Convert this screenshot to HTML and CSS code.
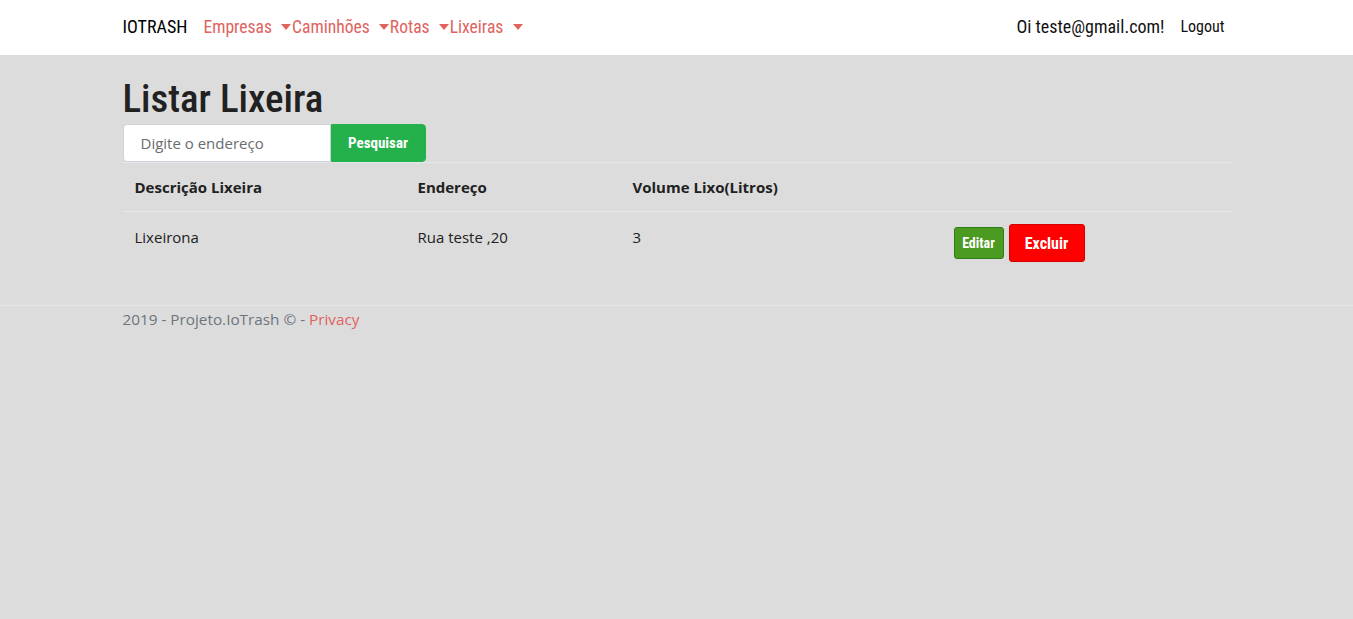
FILE: index.html
```html
<!DOCTYPE html>
<html lang="pt-BR">
<head>
<meta charset="utf-8">
<title>Listar Lixeira - IoTrash</title>
<link rel="stylesheet" href="styles.css">
</head>
<body>
<header class="navbar">
  <div class="container nav-inner">
    <div class="nav-left">
      <a class="brand" href="#">IOTRASH</a>
      <a class="nav-link" href="#">Empresas <span class="caret"></span></a>
      <a class="nav-link" href="#">Caminhões <span class="caret"></span></a>
      <a class="nav-link" href="#">Rotas <span class="caret"></span></a>
      <a class="nav-link" href="#">Lixeiras <span class="caret"></span></a>
    </div>
    <div class="nav-right">
      <span class="hello">Oi teste@gmail.com!</span>
      <a class="logout" href="#">Logout</a>
    </div>
  </div>
</header>
<main class="container">
  <h1 class="title">Listar Lixeira</h1>
  <form class="search">
    <input class="search-input" type="text" placeholder="Digite o endereço">
    <button class="btn btn-search" type="button">Pesquisar</button>
  </form>
  <table class="table">
    <thead>
      <tr>
        <th class="c1">Descrição Lixeira</th>
        <th class="c2">Endereço</th>
        <th class="c3">Volume Lixo(Litros)</th>
        <th class="c4"></th>
      </tr>
    </thead>
    <tbody>
      <tr>
        <td>Lixeirona</td>
        <td>Rua teste ,20</td>
        <td>3</td>
        <td class="actions">
          <div class="action-row">
            <a class="btn btn-edit" href="#">Editar</a>
            <a class="btn btn-del" href="#">Excluir</a>
          </div>
        </td>
      </tr>
    </tbody>
  </table>
</main>
<footer class="footer">
  <div class="container">2019 - Projeto.IoTrash © - <a class="privacy" href="#">Privacy</a></div>
</footer>
</body>
</html>
```
FILE: styles.css
```css
* { box-sizing: border-box; }
html, body { margin: 0; padding: 0; }
body {
  background: #dcdcdc;
  font-family: "Open Sans", "Noto Sans", sans-serif;
  font-size: 16px;
  color: #212529;
  min-height: 619px;
}
a { text-decoration: none; }
.container {
  width: 1140px;
  margin: 0 auto;
  padding: 0 14px 0 16px;
}
.navbar {
  background: #fff;
  height: 55px;
}
.nav-inner {
  display: flex;
  align-items: center;
  justify-content: space-between;
  height: 55px;
  padding-bottom: 2px;
}
.nav-left, .nav-right {
  display: flex;
  align-items: center;
  font-family: "Roboto", sans-serif;
  font-stretch: 84%;
}
.brand {
  color: #000;
  font-size: 18px;
  margin-right: 16px;
}
.nav-link {
  color: #e0635d;
  font-size: 17.6px;
  display: flex;
  align-items: center;
}
.caret {
  display: inline-block;
  width: 0; height: 0;
  border-left: 5px solid transparent;
  border-right: 5px solid transparent;
  border-top: 6px solid #e0635d;
  margin: 0 1px 0 9px;
}
.nav-link:last-child .caret { margin-left: 10px; }
.hello { color: #111; font-size: 18px; margin-right: 16px; }
.logout { color: #111; font-size: 16px; margin-right: 8px; }
.title {
  font-family: "Roboto", sans-serif;
  font-stretch: 77%;
  font-size: 39px;
  font-weight: 500;
  margin: 20px 0 0;
  line-height: 49px;
  color: #212121;
}
.search { display: flex; height: 38px; }
.search-input {
  width: 208px;
  height: 38px;
  border: 1px solid #ced4da;
  border-radius: 4px 0 0 4px;
  background: #fff;
  padding: 0 17px;
  font-family: "Open Sans", sans-serif;
  font-size: 15px;
  color: #495057;
}
.search-input::placeholder { color: #6c6c6c; }
.btn {
  display: inline-flex;
  align-items: center;
  justify-content: center;
  font-family: "Roboto", sans-serif;
  font-stretch: 82%;
  font-weight: 700;
  color: #fff;
  border-radius: 3px;
}
.btn-search {
  width: 95px;
  height: 38px;
  background: #24b04a;
  border: 1px solid #24b04a;
  font-size: 15px;
  border-radius: 0 4px 4px 0;
}
.table {
  width: 100%;
  border-collapse: collapse;
  font-family: "Open Sans", sans-serif;
  font-size: 15px;
  color: #212121;
}
.table th, .table td {
  text-align: left;
  padding: 0 12px;
  border-top: 1px solid #e4e6e9;
}
.table th { height: 49px; font-weight: 700; padding-bottom: 1px; }
.table td { height: 51px; padding-bottom: 2px; }
.c1 { width: 283px; }
.c2 { width: 215px; }
.c3 { width: 321px; }
.action-row {
  display: flex;
  align-items: center;
  gap: 5px;
  margin-top: 12px;
}
.btn-edit {
  width: 50px;
  height: 32px;
  background: #4b9a21;
  border: 1px solid #2e7d14;
  font-size: 14px;
}
.btn-del {
  width: 76px;
  height: 38px;
  background: #ff0000;
  border: 1px solid #d40000;
  font-size: 16px;
}
.footer {
  margin-top: 41px;
  border-top: 1px solid #e4e6e9;
  padding-top: 0;
  font-family: "Open Sans", sans-serif;
  font-size: 15.3px;
  color: #6c757d;
  line-height: 26px;
}
.privacy { color: #e0635d; }
```
